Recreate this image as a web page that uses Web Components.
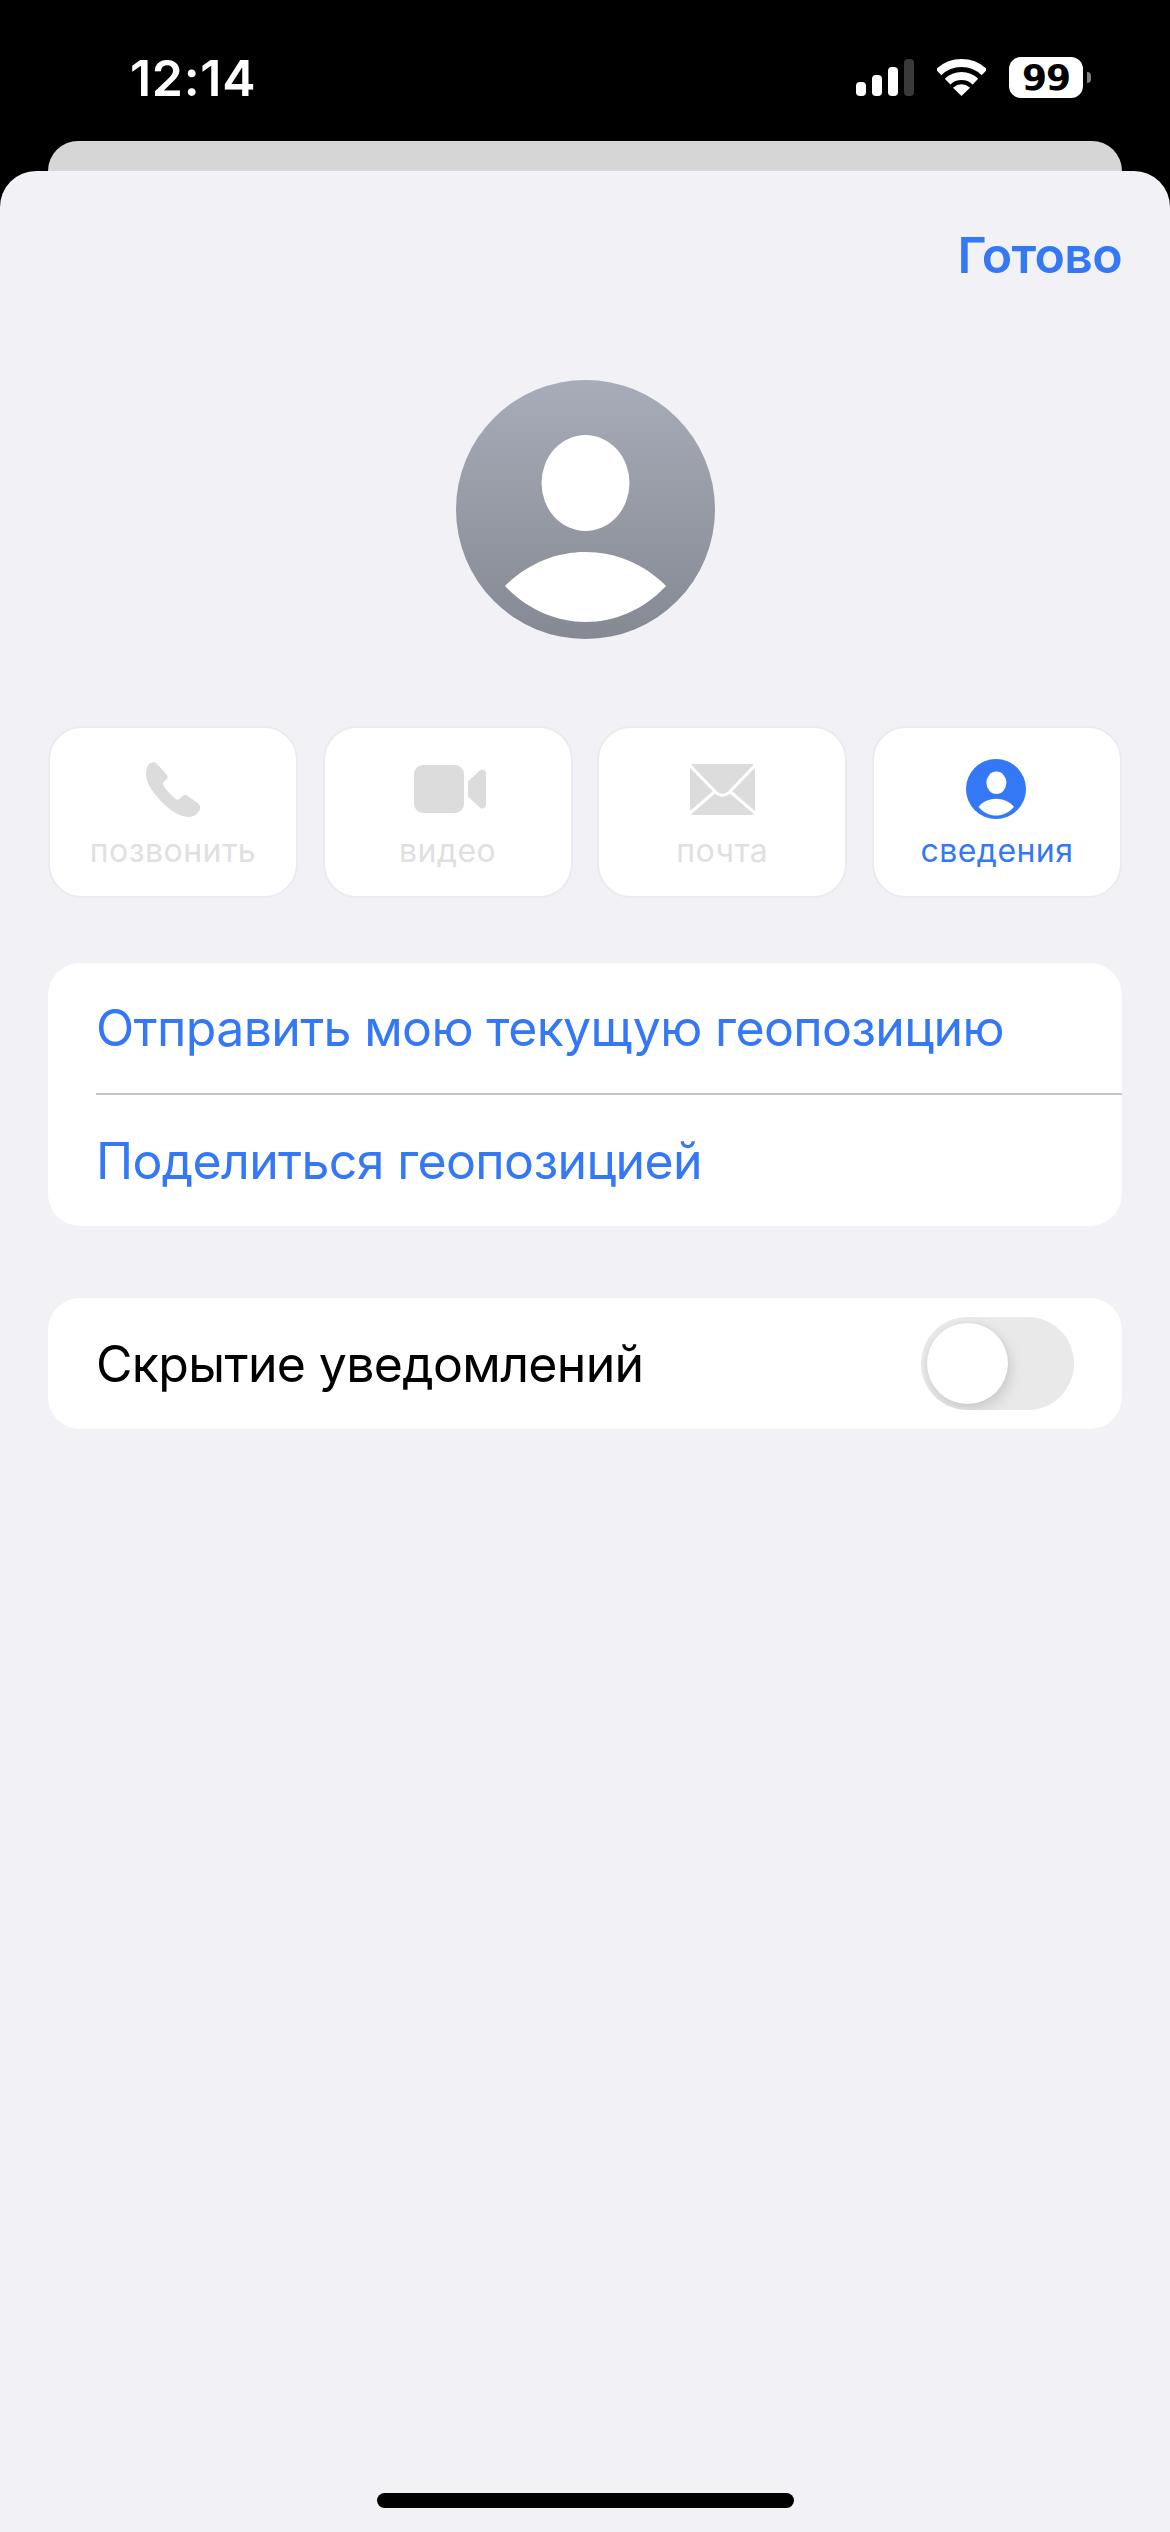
<!DOCTYPE html>
<html lang="ru">
<head>
<meta charset="utf-8">
<title>Контакт</title>
<style>
html,body{margin:0;padding:0;background:#000}
body{font-family:Inter,"Liberation Sans",sans-serif;width:1170px;height:2532px;overflow:hidden}
</style>
</head>
<body>
<phone-screen>
  <status-bar slot="status" time="12:14" battery="99"></status-bar>
  <done-header>Готово</done-header>
  <contact-avatar></contact-avatar>
  <action-row>
    <action-button icon="phone" disabled>позвонить</action-button>
    <action-button icon="video" disabled>видео</action-button>
    <action-button icon="mail" disabled>почта</action-button>
    <action-button icon="info">сведения</action-button>
  </action-row>
  <list-group>
    <list-row kind="link" first>Отправить мою текущую геопозицию</list-row>
    <list-row kind="link" divided>Поделиться геопозицией</list-row>
  </list-group>
  <list-group gap>
    <list-row kind="switch">Скрытие уведомлений<toggle-switch slot="end"></toggle-switch></list-row>
  </list-group>
</phone-screen>
<script>
const def=(name,css,html)=>{
  customElements.define(name,class extends HTMLElement{
    connectedCallback(){
      if(this.shadowRoot)return;
      const r=this.attachShadow({mode:'open'});
      r.innerHTML=`<style>${css}</style>${typeof html==='function'?html(this):html}`;
    }
  });
};
const ICONS={
phone:`<svg width="55" height="55" viewBox="0 0 55 55"><path fill="#dcdcdc" d="M3 2C6-.5 9-.5 11 2L20.6 12.6C22 14.4 21.8 15.8 20.6 17.2L17.8 20C16.9 21 16.9 22.2 17.6 23.4C20.5 28 24.5 32.5 29.5 36.8C31 38 32.3 38 33.4 37L36.4 34.2C38 32.8 39.8 32.6 41.6 33.8L52 41.2C54.5 43 55 46 53.5 48.5C51 53 46.5 55.5 41.5 55C32 54 22 47 14 38C5 28.5-.5 19 0 11C.2 7.5 1 4 3 2Z"/></svg>`,
video:`<svg style="margin-left:4px" width="72" height="48" viewBox="0 0 72 48"><rect width="50" height="48" rx="9" fill="#dcdcdc"/><path fill="#dcdcdc" d="M54 16.500L65.500 5.800C68 3.500 72 4.500 72 8.500V39.500C72 43.500 68 44.500 65.500 42.200L54 31.500Z"/></svg>`,
mail:`<svg width="65" height="51" viewBox="0 0 65 51"><rect width="65" height="51" rx="4" fill="#dcdcdc"/><path fill="none" stroke="#fff" stroke-width="3" d="M0 1.500L26 28.500C29.500 32 35.500 32 39 28.500L65 1.500M25 27.500L0 49M40 27.500L65 49"/></svg>`,
info:`<svg style="margin-right:2px" width="60" height="60" viewBox="0 0 60 60"><circle cx="30" cy="30" r="30" fill="#3478f6"/><ellipse cx="30.400" cy="23.800" rx="10" ry="11.200" fill="#fff"/><path fill="#fff" d="M12.500 47.800C21 37 39 37 48 47.800C39 59.500 21 59.500 12.500 47.800Z"/></svg>`
};
def('phone-screen',`:host{display:flex;flex-direction:column;width:1170px;height:2532px;background:#000}
.back{height:30px;margin:0 48px;background:#d6d6d6;border-radius:32px 32px 0 0;flex:none}
.sheet{flex:1;display:flex;flex-direction:column;background:#f1f1f6;border-radius:36px 36px 0 0;min-height:0}
.body{flex:1;padding:0 48px;display:flex;flex-direction:column;min-height:0}
.home{flex:none;align-self:center;width:417px;height:15px;border-radius:8px;background:#000;margin-bottom:24px}`,
`<slot name="status"></slot><div class="back"></div><div class="sheet"><div class="body"><slot></slot></div><div class="home"></div></div>`);
def('status-bar',`:host{display:flex;flex:none;height:141px;box-sizing:border-box;padding:0 79px 0 130px;background:#000;color:#fff;justify-content:space-between;font-family:Inter,"Liberation Sans",sans-serif}
.time{font-size:50px;font-weight:600;line-height:50px;margin-top:53px;letter-spacing:.7px}
.icons{display:flex;align-items:flex-start;padding-top:57px}
.signal{display:flex;align-items:flex-end;gap:6px;height:37px;margin-top:2px}
.signal i{display:block;width:10px;border-radius:4px;background:#fff}
.signal i:last-child{background:#3a3a3c}
.wifi{margin:2px 23px 0 23px;display:block}
.batt{width:74px;height:41px;border-radius:12px;background:#fff;color:#000;font-size:36px;font-weight:700;line-height:41px;text-align:center;font-family:"DejaVu Sans",Inter,sans-serif;letter-spacing:-1px}
.nub{width:4px;height:11px;margin:15px 0 0 4px;border-radius:0 4px 4px 0;background:#808080}`,
el=>`<div class="time">${el.getAttribute('time')}</div>
<div class="icons"><div class="signal"><i style="height:14px"></i><i style="height:21px"></i><i style="height:29px"></i><i style="height:37px"></i></div>
<svg class="wifi" width="49" height="37" viewBox="0 0 49 37"><path fill="none" stroke="#fff" stroke-width="8" d="M1.600 13.300A33 33 0 0 1 47.400 13.300M10.600 22.600A20 20 0 0 1 38.400 22.600"/><path fill="#fff" d="M24.500 37L16 28.700Q24.500 22 33 28.700Z"/></svg>
<div class="batt">${el.getAttribute('battery')}</div><div class="nub"></div></div>`);
def('done-header',`:host{display:block;flex:none;text-align:right;color:#3478f6;font-size:50px;font-weight:600;letter-spacing:-.7px;line-height:60px;padding-top:54px;height:60px;margin-bottom:95px}`,`<slot></slot>`);
def('contact-avatar',`:host{display:block;flex:none;width:259px;height:259px;align-self:center;margin-bottom:87px}svg{display:block}`,
`<svg width="259" height="259" viewBox="0 0 259 259"><defs><linearGradient id="g" x1="0" y1="0" x2="0" y2="1"><stop offset="0" stop-color="#a8acb8"/><stop offset="1" stop-color="#858993"/></linearGradient></defs><circle cx="129.500" cy="129.500" r="129.500" fill="url(#g)"/><ellipse cx="129.500" cy="103" rx="44" ry="48" fill="#fff"/><path fill="#fff" d="M49 206C94 160.700 165 160.700 210 206C165 254 94 254 49 206Z"/></svg>`);
def('action-row',`:host{display:grid;grid-template-columns:repeat(4,250px);justify-content:space-between;flex:none;margin-bottom:65px}`,`<slot></slot>`);
customElements.define('action-button',class extends HTMLElement{
  connectedCallback(){
    if(this.shadowRoot)return;
    const dis=this.hasAttribute('disabled');
    this.attachShadow({mode:'open'}).innerHTML=`<style>
:host{display:flex;flex-direction:column;align-items:center;box-sizing:border-box;height:172px;background:#fff;border:2px solid #ebebef;border-radius:34px;color:${dis?'#e0e0e0':'#3478f6'}}
.i{height:60px;margin-top:31px;display:flex;align-items:center;justify-content:center}
svg{display:block}
.t{font-size:32px;line-height:36px;margin-top:14px;letter-spacing:.45px}
</style><div class="i">${ICONS[this.getAttribute('icon')]}</div><div class="t"><slot></slot></div>`;
  }
});
customElements.define('list-group',class extends HTMLElement{
  connectedCallback(){
    if(this.shadowRoot)return;
    this.attachShadow({mode:'open'}).innerHTML=`<style>
:host{display:block;flex:none;background:#fff;border-radius:32px;overflow:hidden;margin-top:${this.hasAttribute('gap')?'72px':'0'}}
</style><slot></slot>`;
  }
});
customElements.define('list-row',class extends HTMLElement{
  connectedCallback(){
    if(this.shadowRoot)return;
    const link=this.getAttribute('kind')==='link',div=this.hasAttribute('divided');
    this.attachShadow({mode:'open'}).innerHTML=`<style>
:host{display:block;margin-left:48px;${div?'border-top:2px solid #c6c6c8;':''}}
.r{display:flex;align-items:center;justify-content:space-between;height:${this.hasAttribute('first')?130:131}px;font-size:50px;letter-spacing:-.65px;color:${link?'#3478f6':'#000'};padding-right:48px}
</style><div class="r"><span><slot></slot></span><slot name="end"></slot></div>`;
  }
});
def('toggle-switch',`:host{display:block;flex:none;width:153px;height:93px;box-sizing:border-box;padding:6px;border-radius:47px;background:#e9e9ea;overflow:hidden}
.k{width:81px;height:81px;border-radius:50%;background:#fff;box-shadow:3px 6px 14px rgba(0,0,0,.13),0 0 4px rgba(0,0,0,.05)}`,`<div class="k"></div>`);
</script>
</body>
</html>
